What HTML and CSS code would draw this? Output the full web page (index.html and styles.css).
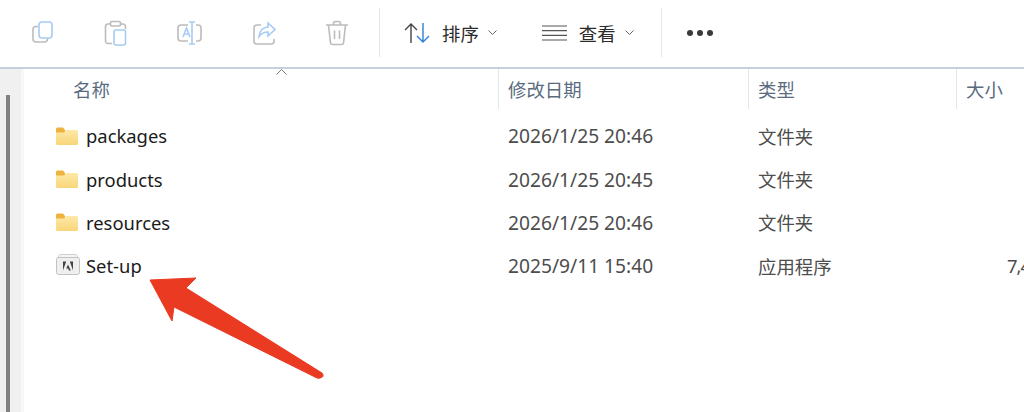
FILE: index.html
```html
<!DOCTYPE html>
<html lang="zh-CN">
<head>
    <meta charset="UTF-8">
    <title>文件资源管理器</title>
    <link rel="stylesheet" href="styles.css">
</head>
<body>
    <div class="toolbar">
        <div class="tool-group">
            <svg class="tool" width="24" height="24" viewBox="0 0 24 24" fill="none" stroke-width="1.6">
                <path stroke="#bcbcbc" d="M7 5.500H5A3 3 0 0 0 2 8.500V18a3 3 0 0 0 3 3h8.500a3 3 0 0 0 3-3v-1"/>
                <rect stroke="#a5ccf2" x="8" y="1" width="13" height="16" rx="3"/>
            </svg>
            <svg class="tool" width="24" height="26" viewBox="0 0 24 26" fill="none" stroke-width="1.6">
                <path stroke="#bcbcbc" d="M6 4H4A2.500 2.500 0 0 0 1.500 6.500V21A2.500 2.500 0 0 0 4 23.500h4M17 4h2a2.500 2.500 0 0 1 2.500 2.500V9"/>
                <rect stroke="#bcbcbc" x="6.500" y="1.500" width="10" height="4.500" rx="1.500"/>
                <rect stroke="#a5ccf2" x="10" y="10" width="11.500" height="15" rx="2"/>
            </svg>
            <svg class="tool" width="26" height="24" viewBox="0 0 26 24" fill="none" stroke-width="1.6">
                <path stroke="#bcbcbc" d="M11 4H4A3 3 0 0 0 1 7v10a3 3 0 0 0 3 3h7M19 4h2a3 3 0 0 1 3 3v10a3 3 0 0 1-3 3h-2"/>
                <path stroke="#a5ccf2" d="M12 1h6M15 1v22M12 23h6M6 16l3.500-9 3.500 9M7.200 13h4.600"/>
            </svg>
            <svg class="tool" width="24" height="24" viewBox="0 0 24 24" fill="none" stroke-width="1.6">
                <path stroke="#bcbcbc" d="M9 4H5A3 3 0 0 0 2 7v13a3 3 0 0 0 3 3h14a3 3 0 0 0 3-3v-2"/>
                <path stroke="#a5ccf2" d="M16 2l7 6.500-7 6.500v-4c-4 0-6.500 1-9 4.500 .5-5.500 4-9 9-9.500z"/>
            </svg>
            <svg class="tool" width="24" height="26" viewBox="0 0 24 26" fill="none" stroke="#bcbcbc" stroke-width="1.6">
                <path d="M1 5h22M8.500 5V3.500a2 2 0 0 1 2-2h3a2 2 0 0 1 2 2V5M3.500 5l2 18a2 2 0 0 0 2 1.500h9a2 2 0 0 0 2-1.500l2-18M9.500 10.500v8.500M14.500 10.500v8.500"/>
            </svg>
        </div>
        <div class="tool-group main">
            <button class="tool-btn sort">
                <svg width="26" height="22" viewBox="0 0 26 22" fill="none" stroke-width="1.4">
                    <path stroke="#444" d="M7 21V2M1 8l6-6 6 6"/>
                    <path stroke="#2f7fd8" d="M19 1v19M13 14l6 6 6-6"/>
                </svg>
                <span>排序</span>
                <svg class="caret" width="9" height="5" viewBox="0 0 9 5" fill="none" stroke="#666"><path d="M.5 .5l4 4 4-4"/></svg>
            </button>
            <button class="tool-btn view">
                <svg width="25" height="16" viewBox="0 0 25 16" fill="none" stroke="#555" stroke-width="1.200">
                    <path d="M0 1h25M0 5.700h25M0 10.300h25M0 15h25"/>
                </svg>
                <span>查看</span>
                <svg class="caret" width="9" height="5" viewBox="0 0 9 5" fill="none" stroke="#666"><path d="M.5 .5l4 4 4-4"/></svg>
            </button>
        </div>
        <div class="tool-group more">
            <i></i><i></i><i></i>
        </div>
    </div>

    <div class="browser">
        <div class="side"><div class="thumb"></div></div>
        <div class="list">
            <div class="row head">
                <div class="cell name">名称<svg class="sort-up" width="11" height="6" viewBox="0 0 11 6" fill="none" stroke="#777"><path d="M.5 5.500l5-5 5 5"/></svg></div>
                <div class="cell date">修改日期</div>
                <div class="cell type">类型</div>
                <div class="cell size">大小</div>
            </div>
            <div class="row">
                <div class="cell name"><svg class="folder" width="22" height="18" viewBox="0 0 22 18"><use href="#folder-icon"/></svg>packages</div>
                <div class="cell date">2026/1/25 20:46</div>
                <div class="cell type">文件夹</div>
                <div class="cell size"></div>
            </div>
            <div class="row">
                <div class="cell name"><svg class="folder" width="22" height="18" viewBox="0 0 22 18"><use href="#folder-icon"/></svg>products</div>
                <div class="cell date">2026/1/25 20:45</div>
                <div class="cell type">文件夹</div>
                <div class="cell size"></div>
            </div>
            <div class="row">
                <div class="cell name"><svg class="folder" width="22" height="18" viewBox="0 0 22 18"><use href="#folder-icon"/></svg>resources</div>
                <div class="cell date">2026/1/25 20:46</div>
                <div class="cell type">文件夹</div>
                <div class="cell size"></div>
            </div>
            <div class="row">
                <div class="cell name">
                    <svg class="folder app" width="24" height="21" viewBox="0 0 24 21">
                        <path d="M2 4l1-2.500a1.500 1.500 0 0 1 1.500-1h15a1.500 1.500 0 0 1 1.500 1L22 4z" fill="#f4f4f4" stroke="#cfcfcf"/>
                        <rect x=".5" y="3.500" width="23" height="17" rx="2" fill="#efefef" stroke="#c2c2c2"/>
                        <path d="M7 7.500h3.200L7 16.500zM13.800 7.500H17v9zM12 10.500l2.800 6h-1.900l-.8-2h-1.900z" fill="#444"/>
                    </svg>Set-up</div>
                <div class="cell date">2025/9/11 15:40</div>
                <div class="cell type">应用程序</div>
                <div class="cell size right">7,4</div>
            </div>
        </div>
    </div>

    <svg class="defs" width="0" height="0">
        <defs>
            <linearGradient id="folder-fill" x1="0" y1="0" x2="0" y2="1">
                <stop offset="0" stop-color="#fde9a8"/>
                <stop offset="1" stop-color="#f9d578"/>
            </linearGradient>
            <g id="folder-icon">
                <path d="M0 2a1.500 1.500 0 0 1 1.500-1.500h5.500l2 2.500v4H0z" fill="#eeb33e"/>
                <path d="M0 5.500h8l2-2.500h10.500A1.500 1.500 0 0 1 22 4.500v12a1.500 1.500 0 0 1-1.500 1.500h-19A1.500 1.500 0 0 1 0 16.500z" fill="url(#folder-fill)"/>
            </g>
        </defs>
    </svg>

    <!-- annotation drawn on top of the screenshot -->
    <svg class="arrow" width="340" height="140" viewBox="0 0 340 140">
        <path fill="#ea3a22" stroke="#ea3a22" stroke-width="1" stroke-linejoin="round"
              d="M150 40 L196 38 L186 48 L322 133 Q325 137 320 138 Q318 139 315 137 L174 67 L172 81 Z"/>
    </svg>
</body>
</html>
```
FILE: styles.css
```css
* {
    box-sizing: border-box;
}
html, body {
    margin: 0;
    padding: 0;
    height: 100%;
}
body {
    position: relative;
    overflow: hidden;
    background: white;
    font-family: "Noto Sans", "Noto Sans CJK SC", sans-serif;
    font-size: 18.4px;
}
.toolbar {
    display: flex;
    align-items: center;
    height: 69px;
    border-bottom: 2px solid #c6d0dc;
    padding-bottom: 2px;
}
.tool-group {
    display: flex;
    align-items: center;
    height: 49px;
}
.tool-group:first-child {
    gap: 49px;
    padding-left: 31px;
    width: 380px;
    border-right: 1px solid #e6e6e6;
}
.tool-group.main {
    width: 282px;
    padding-left: 24px;
    gap: 45px;
    border-right: 1px solid #e6e6e6;
}
.tool-btn {
    display: flex;
    align-items: center;
    border: none;
    background: none;
    padding: 0;
    font: inherit;
    color: #2b2b2b;
}
.tool-btn span {
    margin-left: 12px;
}
.tool-btn .caret {
    margin-left: 9px;
}
.more {
    gap: 4px;
    padding-left: 25px;
}
.more i {
    width: 6px;
    height: 6px;
    border-radius: 50%;
    background: #3a3a3a;
}
.browser {
    display: flex;
    height: 343px;
}
.side {
    width: 24px;
    background: #f0f0f0;
    border-right: 3px solid #f8f8f8;
    padding: 26px 0 0 6px;
}
.thumb {
    width: 4px;
    height: 100%;
    background: #808080;
}
.list {
    flex: 1;
    min-width: 0;
}
.row {
    display: flex;
    align-items: center;
    height: 43.4px;
    color: #1a1a1a;
}
.row.head {
    height: 40px;
    margin-bottom: 5px;
    color: #5a6b80;
}
.row.head .cell {
    height: 100%;
    border-right: 1px solid #e2e5ea;
    padding-bottom: 1px;
}
.row.head .size {
    border-right: none;
}
.cell {
    display: flex;
    align-items: center;
    position: relative;
    white-space: nowrap;
    overflow: hidden;
}
.name {
    width: 475px;
    padding-left: 32px;
}
.head .name {
    padding-left: 49px;
}
.date {
    width: 250px;
    padding-left: 9px;
    color: #4d4d4d;
    font-size: 19.2px;
}
.head .date {
    color: #5a6b80;
    font-size: 18.4px;
}
.type {
    width: 208px;
    padding-left: 9px;
    color: #4d4d4d;
}
.head .type {
    color: #5a6b80;
}
.size {
    flex: 1;
    padding-left: 9px;
    color: #4d4d4d;
}
.head .size {
    color: #5a6b80;
}
.size.right {
    padding-left: 50px;
    letter-spacing: -1px;
}
.folder {
    flex: none;
    margin-right: 8px;
}
.folder.app {
    margin-right: 6px;
    margin-top: -3px;
}
/* sits on the header edge, over the name column */
.sort-up {
    position: absolute;
    top: 0;
    left: 252px;
}
.defs {
    position: absolute;
}
.arrow {
    position: absolute;
    left: 0;
    top: 240px;
}
```
